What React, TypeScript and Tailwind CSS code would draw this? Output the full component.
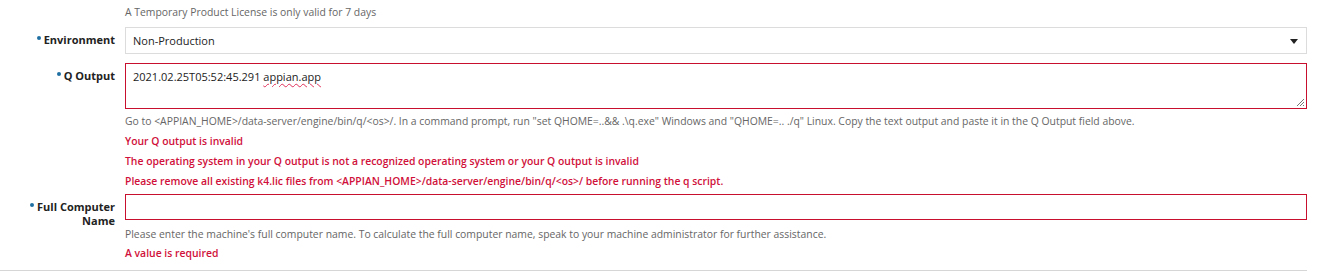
export default function App() {
  return (
    <div
      className="w-[1327px] bg-white pt-[5px] text-[#333]"
      style={{ fontFamily: '"Open Sans", "Liberation Sans", sans-serif' }}
    >
      <div className="w-[1307px]">
        {/* license note */}
        <div className="flex">
          <div className="w-[125px] shrink-0" />
          <p className="text-[10.4px] leading-[14px] text-[#666]">
            A Temporary Product License is only valid for 7 days
          </p>
        </div>

        {/* Environment */}
        <div className="mt-[8px] flex">
          <Label text="Environment" className="pt-[6px]" />
          <div className="flex h-[27px] flex-1 items-center justify-between border border-[#dcdcdc] pl-[7px] pr-[8px]">
            <span className="text-[11px] leading-[14px] text-[#222]">Non-Production</span>
            <svg width="8" height="5" viewBox="0 0 8 5" className="mt-[1px]">
              <path d="M0 0 L8 0 L4 5 Z" fill="#222" />
            </svg>
          </div>
        </div>

        {/* Q Output */}
        <div className="mt-[9px] flex">
          <Label text="Q Output" className="pt-[6px]" />
          <div className="flex-1">
            <div className="relative h-[46px] w-full border border-[#c8102e] px-[7px] py-[6px] text-[11px] leading-[14px] text-[#222]">
              2021.02.25T05:52:45.291{" "}
              <span className="underline decoration-[#e0305a] decoration-wavy decoration-1 underline-offset-2">
                appian.app
              </span>
              <svg
                width="9"
                height="9"
                viewBox="0 0 9 9"
                className="absolute bottom-[1px] right-[1px]"
              >
                <path d="M8 1 L1 8 M8 4 L4 8 M8 7 L7 8" stroke="#777" strokeWidth="1" />
              </svg>
            </div>
            <p className="mt-[5px] text-[10.4px] leading-[14px] text-[#666]">
              Go to &lt;APPIAN_HOME&gt;/data-server/engine/bin/q/&lt;os&gt;/. In a command prompt, run "set QHOME=..&amp;&amp; .\q.exe" Windows and "QHOME=.. ./q" Linux. Copy the text output and paste it in the Q Output field above.
            </p>
            <div className="mt-[6px] flex flex-col gap-[6px] text-[10.4px] font-semibold leading-[14px] text-[#d0103a]">
              <p>Your Q output is invalid</p>
              <p>The operating system in your Q output is not a recognized operating system or your Q output is invalid</p>
              <p>Please remove all existing k4.lic files from &lt;APPIAN_HOME&gt;/data-server/engine/bin/q/&lt;os&gt;/ before running the q script.</p>
            </div>
          </div>
        </div>

        {/* Full Computer Name */}
        <div className="mt-[6px] flex">
          <Label text="Full Computer Name" className="pt-[6px]" />
          <div className="flex-1">
            <div className="h-[26px] w-full border border-[#c8102e]" />
            <p className="mt-[7px] text-[10.4px] leading-[14px] text-[#666]">
              Please enter the machine's full computer name. To calculate the full computer name, speak to your machine administrator for further assistance.
            </p>
            <p className="mt-[5px] text-[10.4px] font-semibold leading-[14px] text-[#d0103a]">
              A value is required
            </p>
          </div>
        </div>

        <div className="mt-[10px] h-px w-full bg-[#d6d6d6]" />
      </div>
    </div>
  );
}

function Label({ text, className = "" }: { text: string; className?: string }) {
  return (
    <div
      className={`w-[125px] shrink-0 pl-[25px] pr-[10px] text-right text-[11px] font-bold leading-[14px] text-[#222] ${className}`}
    >
      <span className="relative -top-[4px] mr-[3px] inline-block h-[4px] w-[4px] rounded-full bg-[#1f6fa3]" />
      {text}
    </div>
  );
}
